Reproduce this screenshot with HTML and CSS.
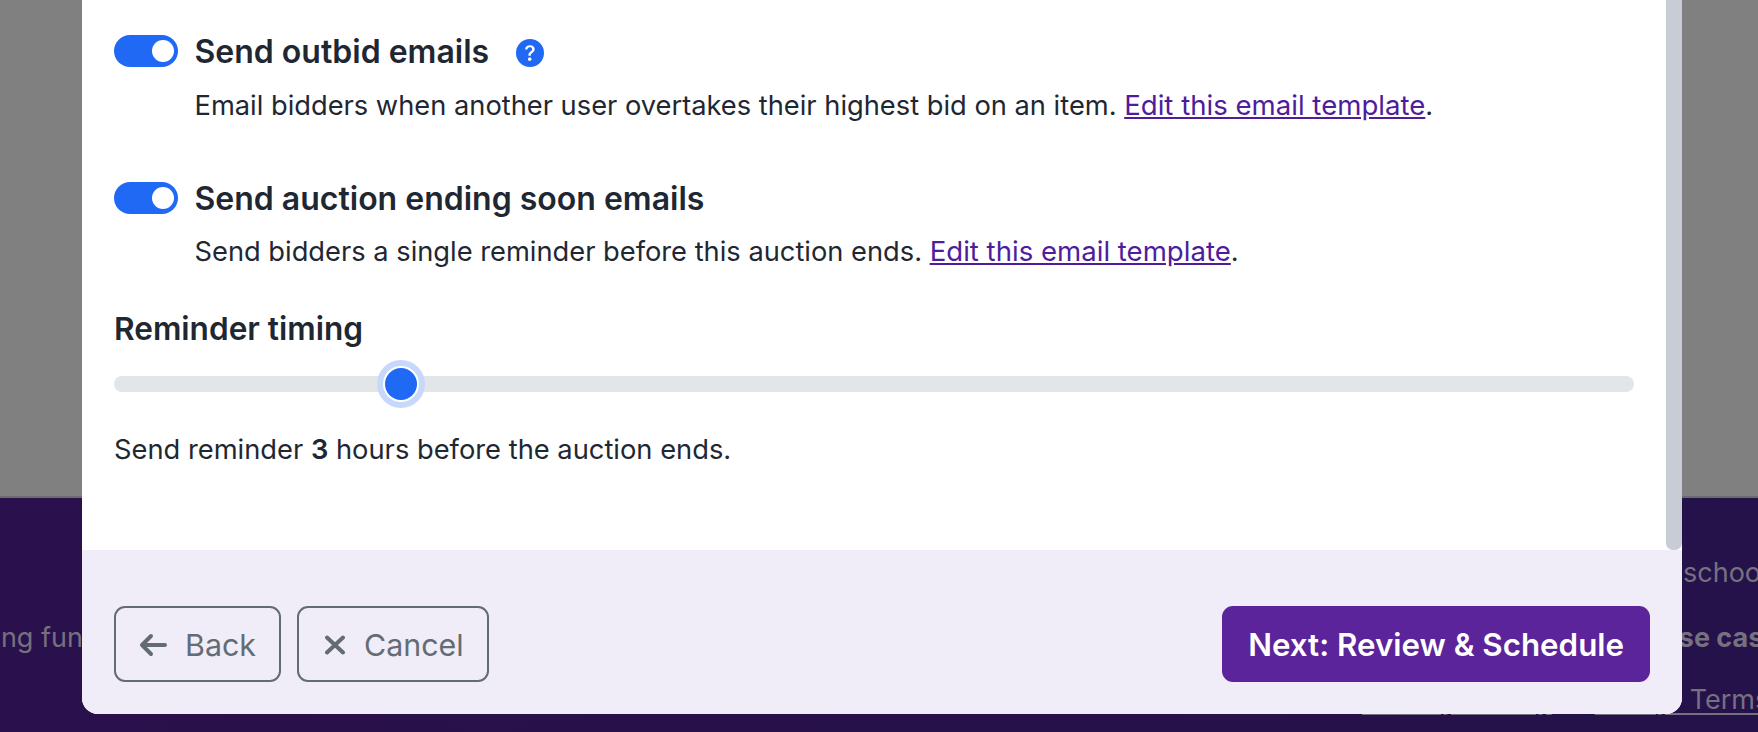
FILE: index.html
```html
<!DOCTYPE html>
<html lang="en">
<head>
<meta charset="utf-8">
<title>Auction notifications</title>
<link rel="stylesheet" href="styles.css">
</head>
<body>
<div class="page">
  <main class="page-main"></main>
  <footer class="site-footer">
    <div class="foot-left"><span>Making fundraising</span></div>
    <div class="foot-right">
      <p class="foot-line foot-school">schools</p>
      <p class="foot-line foot-strong">Use cases</p>
      <p class="foot-links"><a href="#">Privacy Policy</a><a href="#">Policy Terms</a></p>
    </div>
  </footer>
</div>
<section class="modal">
  <div class="modal-body">
    <div class="modal-content">
      <div class="setting">
        <span class="toggle"><span class="knob"></span></span>
        <h3 class="setting-title">Send outbid emails
          <svg class="help" viewBox="0 0 16 16" aria-hidden="true"><path d="M16 8A8 8 0 1 1 0 8a8 8 0 0 1 16 0zM5.496 6.033h.825c.138 0 .248-.113.266-.25.09-.656.54-1.134 1.342-1.134.686 0 1.314.343 1.314 1.168 0 .635-.374.927-.965 1.371-.673.489-1.206 1.06-1.168 1.987l.003.217a.25.25 0 0 0 .25.246h.811a.25.25 0 0 0 .25-.25v-.105c0-.718.273-.927 1.01-1.486.609-.463 1.244-.977 1.244-2.056 0-1.511-1.276-2.241-2.673-2.241-1.267 0-2.655.59-2.75 2.286a.237.237 0 0 0 .241.247zm2.325 6.443c.61 0 1.029-.394 1.029-.927 0-.552-.42-.94-1.029-.94-.584 0-1.009.388-1.009.94 0 .533.425.927 1.01.927z"/></svg>
        </h3>
        <p class="setting-desc">Email bidders when another user overtakes their highest bid on an item. <a href="#">Edit this email template</a>.</p>
      </div>
      <div class="setting setting-second">
        <span class="toggle"><span class="knob"></span></span>
        <h3 class="setting-title">Send auction ending soon emails</h3>
        <p class="setting-desc">Send bidders a single reminder before this auction ends. <a href="#">Edit this email template</a>.</p>
      </div>
      <h3 class="timing-title">Reminder timing</h3>
      <input class="timing-range" type="range" min="1" max="12" value="3" aria-label="Reminder timing">
      <p class="timing-note">Send reminder <strong>3</strong> hours before the auction ends.</p>
    </div>
    <div class="scrollbar"></div>
  </div>
  <div class="modal-footer">
    <div class="footer-left">
      <button class="btn btn-outline" type="button">
        <svg class="btn-icon icon-back" viewBox="0 0 28 24" aria-hidden="true"><path d="M12 3 3 12l9 9M3 12h23"/></svg>Back
      </button>
      <button class="btn btn-outline btn-cancel" type="button">
        <svg class="btn-icon icon-x" viewBox="0 0 22 20" aria-hidden="true"><path d="M3 2.500 19 17.500M19 2.500 3 17.500"/></svg>Cancel
      </button>
    </div>
    <button class="btn btn-primary" type="button">Next: Review &amp; Schedule</button>
  </div>
</section>
</body>
</html>
```
FILE: styles.css
```css
* { box-sizing: border-box; }
html, body { margin: 0; height: 732px; overflow: hidden; }
body { font-family: Inter, "Noto Sans", sans-serif; color: #1f2733; background: #808080; }
p, h3 { margin: 0; }

.page { display: flex; flex-direction: column; height: 732px; overflow: hidden; }
.page-main { height: 498px; background: #808080; border-bottom: 2px solid #6c6b70; flex: none; }
.site-footer {
  flex: 1; display: flex; justify-content: space-between; overflow: hidden;
  background: linear-gradient(90deg, #2a104c, #25124a); color: #76707f;
  font-size: 27px; line-height: 40px; white-space: nowrap;
}
.foot-left { margin-left: -60px; padding-top: 120px; }
.foot-right { width: 396px; flex: none; padding-top: 55px; }
.foot-line { height: 65px; }
.foot-school { padding-left: 321px; }
.foot-strong { font-weight: 700; padding-left: 297px; height: 62px; }
.foot-links { display: flex; gap: 43px; }
.foot-links a { color: inherit; text-decoration: underline; text-decoration-thickness: 2px; text-underline-offset: 4px; word-spacing: 11px; }

.modal {
  position: absolute; left: 82px; top: 0; width: 1600px; height: 714px;
  display: flex; flex-direction: column; overflow: hidden;
  background: #fff; border-radius: 0 0 16px 16px;
}
.modal-body { flex: 1; display: flex; min-height: 0; }
.modal-content { flex: 1; padding: 35px 32px 0; min-width: 0; }
.scrollbar { width: 16px; flex: none; background: #c8ccd4; border-radius: 0 0 7px 7px; }

.setting { display: grid; grid-template-columns: 64px 1fr; column-gap: 16.500px; align-items: center; }
.setting-second { margin-top: 57px; }
.toggle {
  display: flex; justify-content: flex-end; align-items: center;
  width: 64px; height: 32px; padding-right: 4px;
  background: #2069f5; border-radius: 16px;
}
.knob { width: 22px; height: 22px; border-radius: 50%; background: #fff; }
.setting-title { font-size: 32px; line-height: 32px; font-weight: 600; display: flex; align-items: center; padding-top: 1px; height: 32px; }
.help { width: 28px; height: 28px; margin: 2px 0 0 27px; fill: #2069f5; }
.setting-desc { grid-column: 2; height: 40px; font-size: 27.270px; line-height: 40px; margin-top: 18px; }
.setting-second .setting-desc { margin-top: 17px; }
.setting-desc a { font-size: 27.600px; }
a { color: #4f1c9c; }

.timing-title { font-size: 31.600px; line-height: 40px; font-weight: 600; margin-top: 38px; }
.timing-range {
  display: block; width: 1520px; height: 32px; margin: 19px 0 0; padding: 0;
  -webkit-appearance: none; appearance: none; background: transparent;
}
.timing-range::-webkit-slider-runnable-track { height: 16px; background: #e3e6e9; border-radius: 8px; }
.timing-range::-webkit-slider-thumb {
  -webkit-appearance: none; appearance: none;
  width: 32px; height: 32px; margin-top: -8px; border-radius: 50%; border: 0;
  background: #2069f5; box-shadow: 0 0 0 2px #fff, 0 0 0 8px #c7d9fb;
}
.timing-note { font-size: 27.300px; line-height: 40px; margin-top: 30px; }
.timing-note strong { font-weight: 600; }

.modal-footer {
  flex: none; height: 164px; display: flex; justify-content: space-between; align-items: flex-start;
  padding: 56px 32px 0; background: #f0edf8;
}
.footer-left { display: flex; gap: 16px; }
.btn {
  display: flex; align-items: center; height: 76px;
  font-family: inherit; font-size: 30.400px; border-radius: 11px; cursor: pointer;
}
.btn-outline { background: transparent; border: 2px solid #636c75; color: #636c75; padding: 1px 23px 0 23px; }
.btn-cancel { padding-left: 25px; }
.btn-primary { background: #5b249a; border: 0; color: #fff; font-weight: 600; font-size: 31.300px; padding: 1px 26px 0; }
.btn-icon { fill: none; stroke: #636c75; stroke-width: 4; stroke-linecap: round; stroke-linejoin: round; margin-right: 18px; flex: none; }
.icon-back { width: 28px; height: 24px; }
.icon-x { width: 22px; height: 20px; }
```
